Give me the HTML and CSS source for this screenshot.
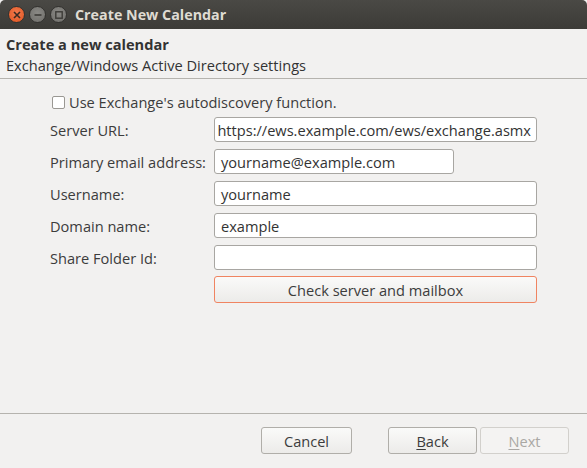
FILE: index.html
```html
<!DOCTYPE html>
<html>
<head>
<meta charset="utf-8">
<link rel="stylesheet" href="styles.css">
</head>
<body>
<div class="window">
  <div class="titlebar">
    <div class="wbtns">
      <span class="wbtn close"><svg width="8" height="8" viewBox="0 0 8 8"><path d="M1 1L7 7M7 1L1 7" stroke="#3a2a22" stroke-width="1.6"/></svg></span>
      <span class="wbtn"><svg width="8" height="8" viewBox="0 0 8 8"><path d="M0.5 4H7.5" stroke="#3c3b37" stroke-width="1.6"/></svg></span>
      <span class="wbtn"><svg width="8" height="8" viewBox="0 0 8 8"><rect x="0.8" y="0.8" width="6.4" height="6.4" fill="none" stroke="#3c3b37" stroke-width="1.4"/></svg></span>
    </div>
    <div class="wtitle">Create New Calendar</div>
  </div>
  <div class="header">
    <div class="h-title">Create a new calendar</div>
    <div class="h-sub">Exchange/Windows Active Directory settings</div>
  </div>
  <div class="content">
    <label class="check"><span class="box"></span>Use Exchange's autodiscovery function.</label>
    <div class="form">
      <div class="lbl">Server URL:</div>
      <div class="field scroll"><span>https://ews.example.com/ews/exchange.asmx</span></div>
      <div class="lbl">Primary email address:</div>
      <div class="field short"><span>yourname@example.com</span></div>
      <div class="lbl">Username:</div>
      <div class="field"><span>yourname</span></div>
      <div class="lbl">Domain name:</div>
      <div class="field"><span>example</span></div>
      <div class="lbl">Share Folder Id:</div>
      <div class="field"><span></span></div>
      <div></div>
      <div class="btn focus">Check server and mailbox</div>
    </div>
  </div>
  <div class="footer">
    <div class="btn cancel">Cancel</div>
    <div class="pair">
      <div class="btn nav"><u>B</u>ack</div>
      <div class="btn nav disabled"><u>N</u>ext</div>
    </div>
  </div>
</div>
</body>
</html>
```
FILE: styles.css
```css
html, body {
  margin: 0;
  padding: 0;
  background: #f2f1f0;
}
body {
  font-family: "Open Sans", "Noto Sans", sans-serif;
  font-size: 14.6px;
  color: #3c3c3c;
}
.window {
  width: 587px;
  height: 468px;
  display: flex;
  flex-direction: column;
  overflow: hidden;
}
.titlebar {
  height: 29px;
  flex: none;
  background: linear-gradient(#4a4945, #3c3b37);
  display: flex;
  align-items: center;
  border-radius: 5px 5px 0 0;
  box-sizing: border-box;
  padding-left: 8px;
}
.wbtns {
  display: flex;
  gap: 4px;
}
.wbtn {
  width: 15px;
  height: 15px;
  border-radius: 50%;
  background: radial-gradient(circle at 50% 40%, #8a8985, #6e6d69);
  border: 1px solid #33322f;
  display: flex;
  align-items: center;
  justify-content: center;
}
.wbtn.close {
  background: radial-gradient(circle at 50% 40%, #f27a4e, #e0541f);
}
.wtitle {
  margin-left: 8px;
  color: #dfdbd2;
  font-weight: bold;
  font-size: 14.3px;
}
.header {
  flex: none;
  height: 50px;
  box-sizing: border-box;
  padding: 5px 6px 0;
  border-bottom: 1px solid #b5b3ae;
}
.h-title {
  font-weight: bold;
  line-height: 21px;
  color: #333;
}
.h-sub {
  line-height: 20px;
  color: #333;
}
.content {
  flex: 1;
  padding: 14px 50px 0 50px;
  border-bottom: 1px solid #b5b3ae;
}
.check {
  display: flex;
  align-items: center;
  gap: 4px;
  margin-left: 2px;
  height: 18px;
}
.box {
  width: 11px;
  height: 11px;
  border: 1px solid #9a9893;
  border-radius: 2px;
  background: #fff;
}
.form {
  margin-top: 6px;
  display: grid;
  grid-template-columns: 164px 323px;
  row-gap: 7px;
  align-items: center;
}
.field {
  height: 25px;
  box-sizing: border-box;
  border: 1px solid #a8a6a2;
  border-radius: 3px;
  background: #fff;
  display: flex;
  align-items: center;
  padding: 0 6px;
  overflow: hidden;
  white-space: nowrap;
  color: #333;
}
.field.scroll {
  justify-content: flex-end;
  padding-right: 5px;
}
.field.short {
  width: 240px;
}
.btn {
  height: 27px;
  box-sizing: border-box;
  border: 1px solid #b0aea9;
  border-radius: 3px;
  background: linear-gradient(#fafaf9, #ecebe9);
  display: flex;
  align-items: center;
  justify-content: center;
  color: #3c3c3c;
}
.btn.focus {
  border-color: #f08461;
  margin-top: -1px;
}
.footer {
  flex: none;
  height: 54px;
  display: flex;
  align-items: flex-start;
  padding-top: 13px;
  box-sizing: border-box;
}
.cancel {
  width: 91px;
  margin-left: 261px;
}
.pair {
  display: flex;
  gap: 3px;
  margin-left: 36px;
}
.nav {
  width: 89px;
}
.disabled {
  color: #aaa8a4;
  background: #f4f3f2;
  border-color: #d2d0cc;
}
u {
  text-decoration-thickness: 1px;
  text-underline-offset: 2px;
}
```
